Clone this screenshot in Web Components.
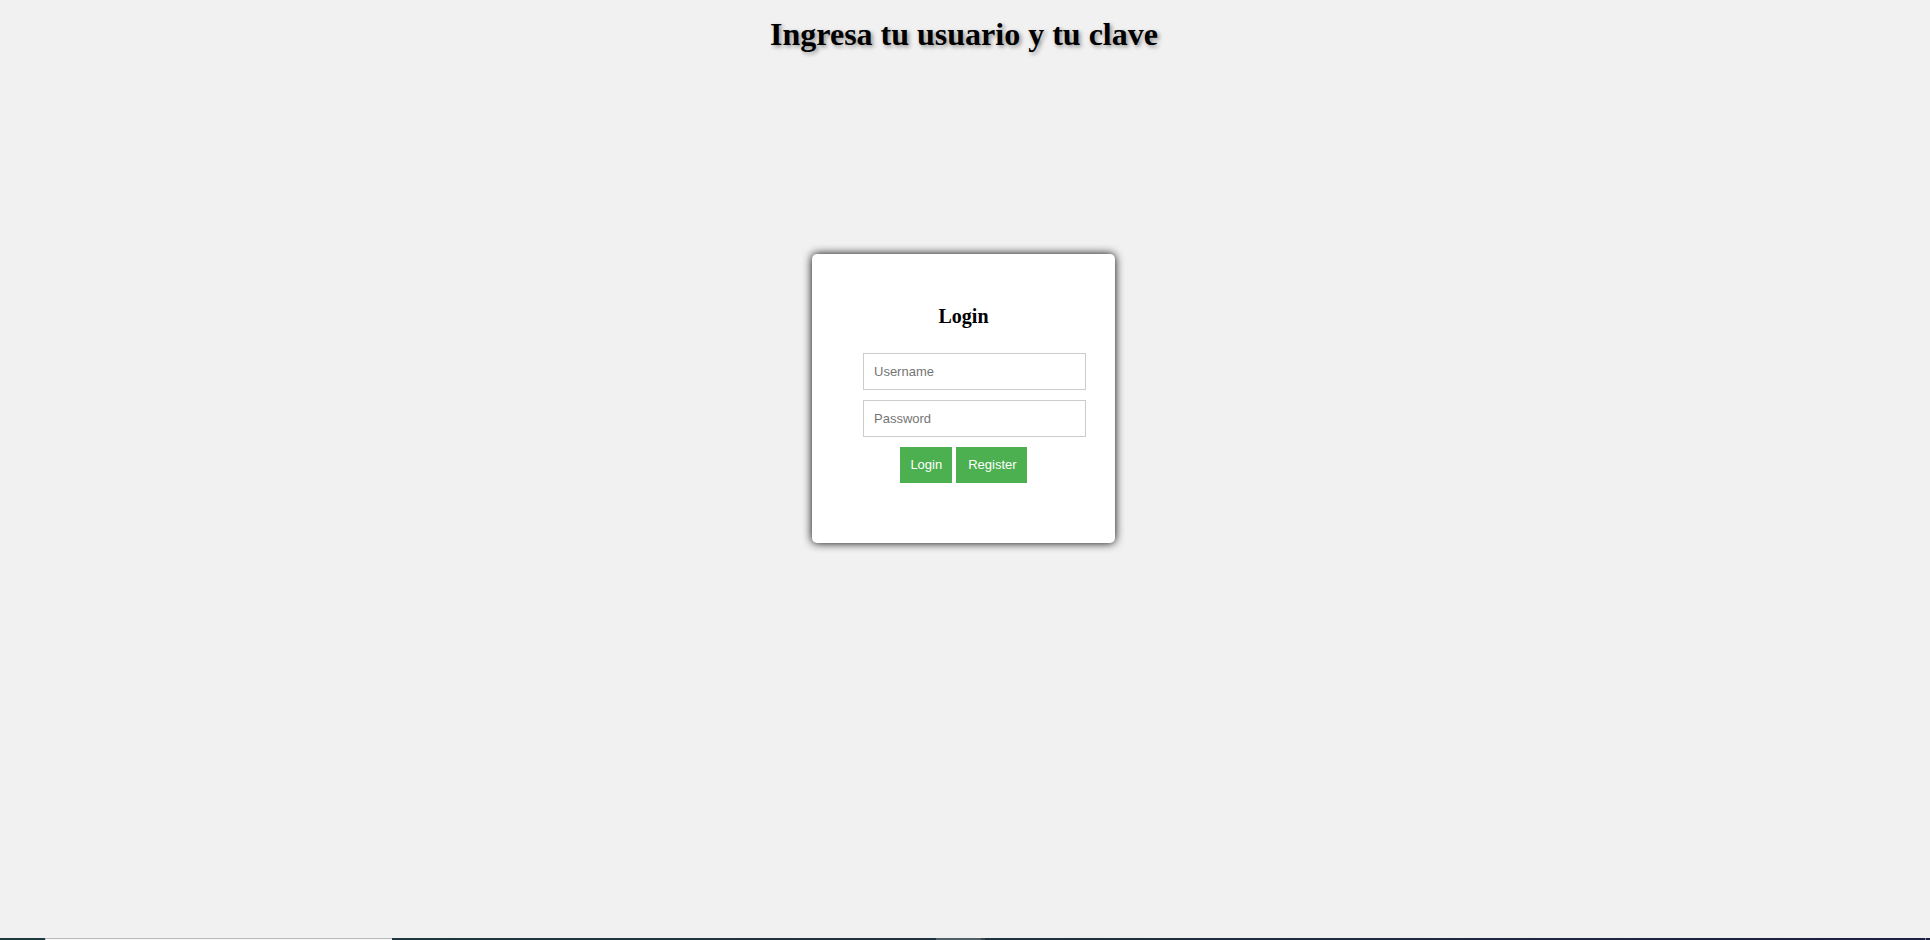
<!DOCTYPE html>
<html lang="es">
<head>
<meta charset="utf-8">
<title>Login</title>
<style>
  html, body { margin: 0; height: 100%; }
  body { background: #f1f1f1; color: #000; font-family: "Liberation Serif", "Times New Roman", serif; }
</style>
</head>
<body>
<login-page>
  <page-title slot="title">Ingresa tu usuario y tu clave</page-title>
  <login-card></login-card>
  <task-bar slot="bar"></task-bar>
</login-page>
<script>
  const define = (name, html) => customElements.define(name, class extends HTMLElement {
    constructor() {
      super();
      this.attachShadow({ mode: 'open' }).innerHTML = html;
    }
  });

  define('page-title', `
    <style>
      :host { display: block; }
      h1 { margin: 0; font-size: 32px; line-height: 36px; font-weight: bold; text-align: center; text-shadow: 2px 2px 4px rgba(0, 0, 0, .4); }
    </style>
    <h1><slot></slot></h1>`);

  define('login-card', `
    <style>
      :host { display: block; box-sizing: border-box; width: 303px; padding: 50px; background: #fff; border-radius: 5px; box-shadow: 0 0 10px #000; }
      h2 { margin: 0 0 25px; font-size: 20px; line-height: 24px; text-align: center; }
      form { display: grid; grid-template-columns: minmax(0, 1fr); gap: 10px; padding-bottom: 10px; }
      input { box-sizing: border-box; width: 223px; height: 37px; margin: 0; padding: 0 10px; border: 1px solid #ccc; border-radius: 0; background: #fff; font: 13px "Liberation Sans", Arial, sans-serif; }
      input::placeholder { color: #757575; opacity: 1; }
      .fields { display: grid; gap: 10px; padding-left: 1px; }
      .actions { display: flex; justify-content: center; gap: 4px; }
      button { height: 36px; margin: 0; padding: 0 10px 2px; border: 0; background: #4caf50; color: #fff; font: 13px "Liberation Sans", Arial, sans-serif; cursor: pointer; }
      .register { padding-left: 12px; }
    </style>
    <h2>Login</h2>
    <form>
      <div class="fields">
        <input type="text" name="username" placeholder="Username" aria-label="Username">
        <input type="password" name="password" placeholder="Password" aria-label="Password">
      </div>
      <div class="actions">
        <button type="button">Login</button>
        <button type="button" class="register">Register</button>
      </div>
    </form>`);

  define('task-bar', `
    <style>
      :host { display: flex; height: 2px; background: linear-gradient(90deg, #1f3a40, #203340 50%, #1b2140); }
      .start { width: 45px; }
      .search { box-sizing: border-box; width: 347px; border-top: 1px solid #bbb; border-left: 1px solid #bbb; background: #f7f7f7; }
      .gap { flex: 11; }
      .app { width: 45px; background: #50606a; }
      .edge { width: 4px; background: #384650; }
      .rest { flex: 19; }
      .desktop { width: 1px; margin-right: 4px; background: #8b8fa0; }
    </style>
    <span class="start"></span><span class="search"></span><span class="gap"></span><span class="app"></span><span class="edge"></span><span class="rest"></span><span class="desktop"></span>`);

  define('login-page', `
    <style>
      :host { display: flex; flex-direction: column; min-height: 100vh; }
      header { padding: 16px 2px 0 0; }
      main { flex: 1; display: flex; justify-content: center; align-items: flex-start; padding: 202px 3px 0 0; }
    </style>
    <header><slot name="title"></slot></header>
    <main><slot></slot></main>
    <footer><slot name="bar"></slot></footer>`);
</script>
</body>
</html>
